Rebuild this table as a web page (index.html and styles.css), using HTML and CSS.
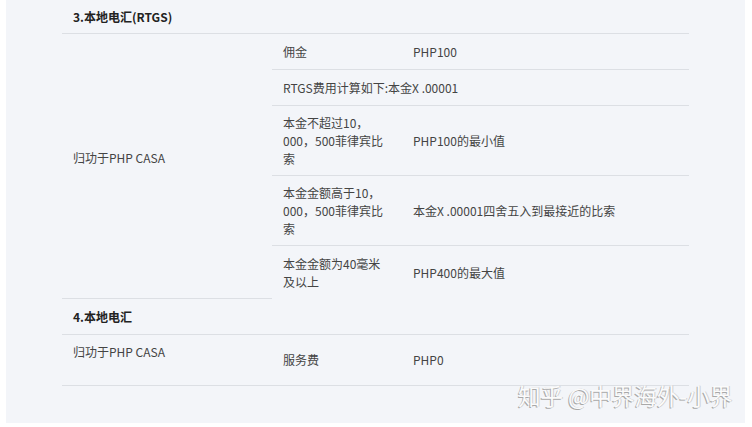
FILE: index.html
```html
<!DOCTYPE html>
<html lang="zh-CN">
<head>
  <meta charset="UTF-8" />
  <meta name="viewport" content="width=device-width, initial-scale=1.0"/>
  <title>本地电汇费用</title>
  <link rel="stylesheet" href="styles.css">
</head>
<body>
  <div class="panel">
    <div class="fee-table">
      <div class="section-head head-first">3.本地电汇(RTGS)</div>
      <div class="group">
        <div class="group-left raised">归功于PHP CASA</div>
        <div class="group-right">
          <div class="item item-short">
            <div class="label">佣金</div>
            <div class="value">PHP100</div>
          </div>
          <div class="item item-short">
            <div class="full">RTGS费用计算如下:本金X .00001</div>
          </div>
          <div class="item item-tall">
            <div class="label">本金不超过10，<br>000，500菲律宾比<br>索</div>
            <div class="value">PHP100的最小值</div>
          </div>
          <div class="item item-tall">
            <div class="label">本金金额高于10，<br>000，500菲律宾比<br>索</div>
            <div class="value">本金X .00001四舍五入到最接近的比索</div>
          </div>
          <div class="item item-last">
            <div class="label">本金金额为40毫米<br>及以上</div>
            <div class="value">PHP400的最大值</div>
          </div>
        </div>
      </div>
      <div class="section-head">4.本地电汇</div>
      <div class="group group-bottom">
        <div class="group-left top">归功于PHP CASA</div>
        <div class="group-right">
          <div class="item item-service">
            <div class="label">服务费</div>
            <div class="value">PHP0</div>
          </div>
        </div>
      </div>
    </div>
    <div class="watermark">知乎 @中界海外-小界</div>
  </div>
</body>
</html>
```

FILE: styles.css
```css
body {
  margin: 0;
  background: #fff;
  font-family: "Noto Sans CJK SC", sans-serif;
  font-size: 12px;
  line-height: 18px;
  color: #444;
}
.panel {
  position: relative;
  margin-left: 6px;
  width: 739px;
  height: 423px;
  background: #f3f5f9;
  padding-left: 56px;
  box-sizing: border-box;
}
.fee-table {
  width: 627px;
}
.section-head {
  height: 35px;
  padding: 0 11px;
  display: flex;
  align-items: center;
  font-weight: bold;
  color: #222;
  border-bottom: 1px solid #dcdfe4;
}
.head-first {
  height: 33px;
}
.group {
  display: flex;
}
.group-left {
  width: 210px;
  padding: 0 11px;
  box-sizing: border-box;
  display: flex;
  align-items: center;
  border-bottom: 1px solid #dcdfe4;
}
.group-left.raised {
  padding-bottom: 16px;
}
.group-left.top {
  align-items: flex-start;
  padding-top: 8px;
}
.group-right {
  flex: 1;
  display: flex;
  flex-direction: column;
}
.group-bottom .group-left,
.group-bottom .group-right {
  border-bottom: 1px solid #dcdfe4;
}
.item {
  display: flex;
  align-items: center;
  border-bottom: 1px solid #dcdfe4;
}
.item-short {
  height: 35px;
}
.item-tall {
  height: 69px;
}
.item-last {
  height: 53px;
  border-bottom: none;
}
.item-service {
  height: 50px;
  border-bottom: none;
}
.label {
  width: 130px;
  padding: 0 11px;
  box-sizing: border-box;
}
.value {
  padding: 0 11px;
}
.full {
  padding: 0 11px;
}
.watermark {
  position: absolute;
  left: 512px;
  top: 380px;
  font-size: 22.5px;
  line-height: 30px;
  color: #fbfbfb;
  text-shadow: -1px 1px 0 #a9a9a9, 1px 0 0 #d0d0d0;
  white-space: nowrap;
}
```
